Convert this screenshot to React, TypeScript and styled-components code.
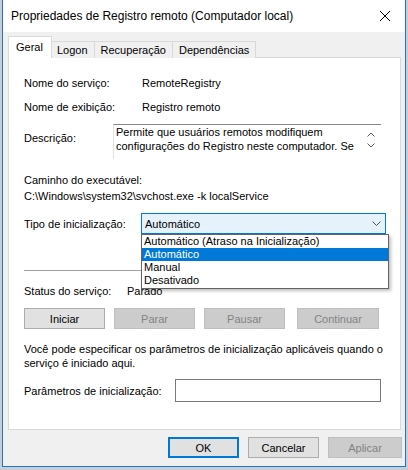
import styled, { createGlobalStyle, css } from "styled-components";

const GlobalStyle = createGlobalStyle`
    body {
        margin: 0;
        background: #c9ced6;
        font-family: "Liberation Sans", Arial, sans-serif;
        font-size: 11px;
        line-height: 14px;
        color: #000;
    }
`;

const Page = styled.div`
    width: 408px;
    height: 470px;
    padding-left: 2px;
    box-sizing: border-box;
    overflow: hidden;
`;

const Window = styled.div`
    width: 404px;
    height: 467px;
    box-sizing: border-box;
    border: 1px solid #1a78c8;
    border-top: none;
    background: #f0f0f0;
    display: flex;
    flex-direction: column;
`;

const TitleBar = styled.div`
    height: 32px;
    background: #fff;
    display: flex;
    align-items: center;
    justify-content: space-between;
    padding: 0 6px 0 8px;
`;

const Title = styled.span`
    font-size: 12px;
`;

const Close = styled.div`
    width: 28px;
    height: 28px;
    display: flex;
    align-items: center;
    justify-content: center;
`;

const Body = styled.div`
    flex: 1;
    padding: 7px 3px 0 5px;
    display: flex;
    flex-direction: column;
`;

const Tabs = styled.div`
    display: flex;
    align-items: flex-end;
    height: 19px;
    padding-left: 1px;
    position: relative;
    z-index: 1;
`;

type TabProps = { $active?: boolean };
const Tab = styled.div<TabProps>`
    height: 16px;
    padding: 0 6px;
    display: flex;
    align-items: center;
    border: 1px solid #d9d9d9;
    border-bottom: none;
    margin-left: -1px;
    background: #f0f0f0;

    ${(p: TabProps) =>
        p.$active &&
        css`
            height: 19px;
            background: #fff;
            padding: 0 8px 2px 7px;
            margin-right: -1px;
            position: relative;
            z-index: 2;
        `}
`;

const Panel = styled.div`
    width: 393px;
    height: 373px;
    box-sizing: border-box;
    margin-top: -1px;
    background: #fff;
    border: 1px solid #d9d9d9;
    padding: 18px 14px 0 15px;
    position: relative;
    display: flex;
    flex-direction: column;
`;

const Row = styled.div<{ $top?: number }>`
    display: flex;
    align-items: center;
    margin-top: ${(p) => p.$top ?? 0}px;
`;

const Label = styled.span<{ $w: number }>`
    width: ${(p) => p.$w}px;
    flex: none;
`;

const Line = styled.div<{ $top?: number }>`
    margin-top: ${(p) => p.$top ?? 0}px;
`;

const DescRow = styled.div`
    display: flex;
    align-items: flex-start;
    margin-top: 10px;
`;

const DescLabel = styled.span`
    width: 89px;
    flex: none;
    margin-top: 7px;
`;

const DescBox = styled.div`
    width: 268px;
    height: 35px;
    box-sizing: border-box;
    border-top: 1px solid #828790;
    border-left: 1px solid #e3e3e3;
    display: flex;
`;

const DescText = styled.div`
    flex: 1;
    padding: 0 0 0 2px;
`;

const Scroll = styled.div`
    width: 17px;
    display: flex;
    flex-direction: column;
    align-items: center;
    justify-content: center;
    gap: 6px;
    padding: 0 2px 4px 0;
`;

const Select = styled.div`
    width: 248px;
    height: 21px;
    box-sizing: border-box;
    border: 1px solid #0078d7;
    background: #e5f1fb;
    display: flex;
    align-items: center;
    justify-content: space-between;
    padding: 0 4px 0 3px;
`;

const Dropdown = styled.div`
    position: absolute;
    left: 132px;
    top: 176px;
    width: 248px;
    box-sizing: border-box;
    background: #fff;
    border: 1px solid #646464;
    box-shadow: 2px 2px 3px rgba(0, 0, 0, 0.25);
    padding: 0 0 1px;
    z-index: 5;
`;

type OptionProps = { $selected?: boolean };
const Option = styled.div<OptionProps>`
    height: 13px;
    line-height: 13px;
    padding-left: 2px;
    ${(p: OptionProps) =>
        p.$selected &&
        css`
            background: #0078d7;
            color: #fff;
        `}
`;

const Separator = styled.div`
    height: 1px;
    background: #a0a0a0;
    margin-top: 36px;
    width: 356px;
`;

const ButtonRow = styled.div<{ $gap: number }>`
    display: flex;
    gap: ${(p) => p.$gap}px;
`;

type ButtonProps = { $disabled?: boolean; $default?: boolean; $w: number };
const Button = styled.div<ButtonProps>`
    width: ${(p: ButtonProps) => p.$w}px;
    height: 21px;
    box-sizing: border-box;
    border: 1px solid #adadad;
    background: #e1e1e1;
    display: flex;
    align-items: center;
    justify-content: center;
    ${(p: ButtonProps) =>
        p.$disabled &&
        css`
            background: #cccccc;
            border-color: #bfbfbf;
            color: #838383;
        `}
    ${(p: ButtonProps) =>
        p.$default &&
        css`
            border: 2px solid #0078d7;
        `}
`;

const Input = styled.div`
    width: 206px;
    height: 23px;
    box-sizing: border-box;
    border: 1px solid #7a7a7a;
    background: #fff;
`;

const Footer = styled.div`
    display: flex;
    justify-content: flex-end;
    gap: 9px;
    margin-top: 7px;
`;

export default function App() {
    return (
        <>
            <GlobalStyle />
            <Page>
                <Window>
                    <TitleBar>
                        <Title>Propriedades de Registro remoto (Computador local)</Title>
                        <Close>
                            <svg width="12" height="12" viewBox="0 0 12 12">
                                <path d="M1 1 L11 11 M11 1 L1 11" stroke="#000" strokeWidth="1" />
                            </svg>
                        </Close>
                    </TitleBar>
                    <Body>
                        <Tabs>
                            <Tab $active>Geral</Tab>
                            <Tab>Logon</Tab>
                            <Tab>Recuperação</Tab>
                            <Tab>Dependências</Tab>
                        </Tabs>
                        <Panel>
                            <Row>
                                <Label $w={118}>Nome do serviço:</Label>
                                <span>RemoteRegistry</span>
                            </Row>
                            <Row $top={10}>
                                <Label $w={118}>Nome de exibição:</Label>
                                <span>Registro remoto</span>
                            </Row>
                            <DescRow>
                                <DescLabel>Descrição:</DescLabel>
                                <DescBox>
                                    <DescText>
                                        Permite que usuários remotos modifiquem configurações do Registro neste computador. Se
                                    </DescText>
                                    <Scroll>
                                        <svg width="8" height="5" viewBox="0 0 8 5">
                                            <path d="M0.5 4.5 L4 1 L7.5 4.5" stroke="#606060" fill="none" />
                                        </svg>
                                        <svg width="8" height="5" viewBox="0 0 8 5">
                                            <path d="M0.5 0.5 L4 4 L7.5 0.5" stroke="#606060" fill="none" />
                                        </svg>
                                    </Scroll>
                                </DescBox>
                            </DescRow>
                            <Line $top={14}>Caminho do executável:</Line>
                            <Line $top={2}>C:\Windows\system32\svchost.exe -k localService</Line>
                            <Row $top={10}>
                                <Label $w={117}>Tipo de inicialização:</Label>
                                <Select>
                                    <span>Automático</span>
                                    <svg width="9" height="5" viewBox="0 0 9 5">
                                        <path d="M0.5 0.5 L4.5 4.5 L8.5 0.5" stroke="#505050" fill="none" />
                                    </svg>
                                </Select>
                            </Row>
                            <Dropdown>
                                <Option>Automático (Atraso na Inicialização)</Option>
                                <Option $selected>Automático</Option>
                                <Option>Manual</Option>
                                <Option>Desativado</Option>
                            </Dropdown>
                            <Separator />
                            <Row $top={13}>
                                <Label $w={103}>Status do serviço:</Label>
                                <span>Parado</span>
                            </Row>
                            <Row $top={10}>
                                <ButtonRow $gap={9}>
                                    <Button $w={81}>Iniciar</Button>
                                    <Button $w={81} $disabled>Parar</Button>
                                    <Button $w={81} $disabled>Pausar</Button>
                                </ButtonRow>
                                <Button $w={82} $disabled style={{ marginLeft: 12 }}>Continuar</Button>
                            </Row>
                            <Line $top={13}>
                                Você pode especificar os parâmetros de inicialização aplicáveis quando o serviço é iniciado aqui.
                            </Line>
                            <Row $top={9}>
                                <Label $w={151}>Parâmetros de inicialização:</Label>
                                <Input />
                            </Row>
                        </Panel>
                        <Footer>
                            <Button $w={71} $default>OK</Button>
                            <Button $w={71}>Cancelar</Button>
                            <Button $w={74} $disabled>Aplicar</Button>
                        </Footer>
                    </Body>
                </Window>
            </Page>
        </>
    );
}
